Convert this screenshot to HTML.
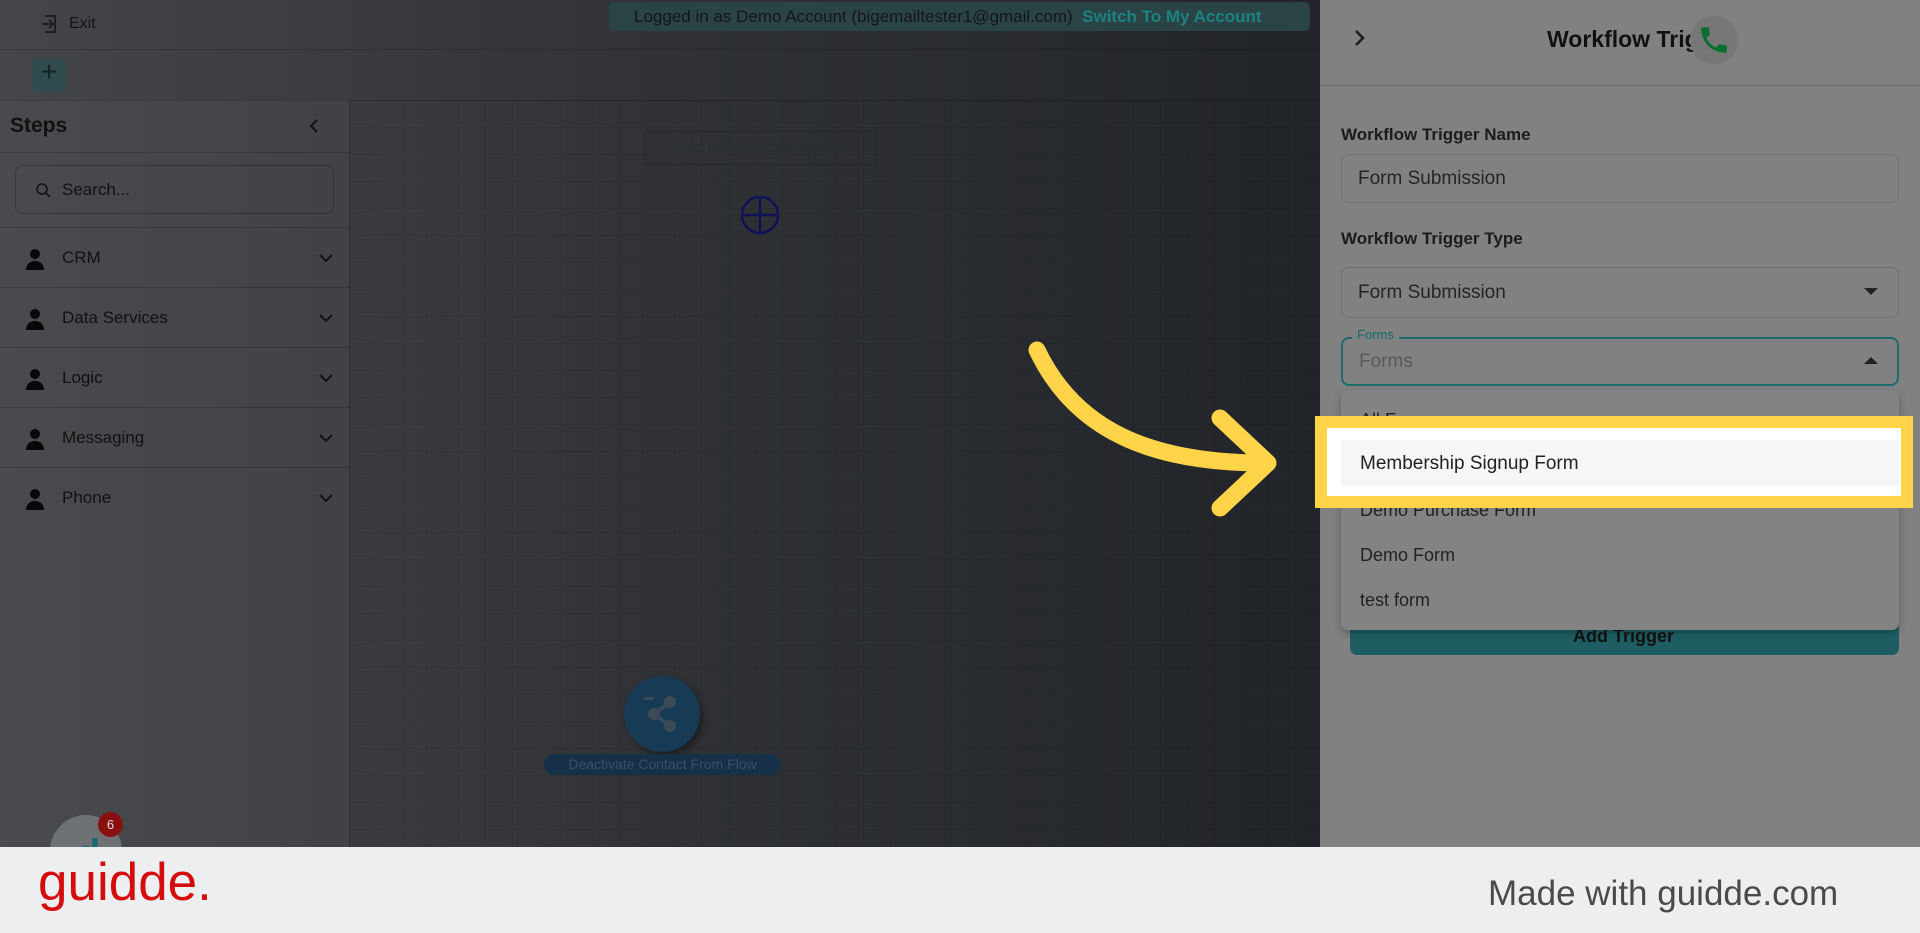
<!DOCTYPE html>
<html><head><meta charset="utf-8">
<style>
*{box-sizing:border-box;margin:0;padding:0}
body{width:1920px;height:933px;overflow:hidden;font-family:"Liberation Sans",sans-serif;position:relative;background:#333}
.abs{position:absolute}
#left{left:0;top:0;width:1320px;height:847px;background:linear-gradient(90deg,#44464a 0%,#303236 50%,#212428 100%)}
#grid{left:350px;top:100px;width:970px;height:747px;background-image:linear-gradient(rgba(0,0,0,.07) 1px,transparent 1px),linear-gradient(90deg,rgba(0,0,0,.07) 1px,transparent 1px);background-size:27px 27px}
.sep{height:1px;background:rgba(0,0,0,.18)}
.item{left:0;width:350px;height:60px;border-bottom:1px solid rgba(0,0,0,.2)}
.item span{position:absolute;left:62px;top:50%;transform:translateY(-50%);font-size:17px;color:#111}
.item svg{position:absolute}
#right{left:1320px;top:0;width:600px;height:847px;background:#818181}
.lbl{position:absolute;left:1341px;font-size:17px;font-weight:bold;color:#1c1c1c}
.inp{position:absolute;left:1341px;width:558px;border:1px solid #707070;border-radius:8px;font-size:19px;color:#252525;padding-left:16px;display:flex;align-items:center}
.opt{position:absolute;left:1360px;font-size:18px;color:#222}
#foot{left:0;top:847px;width:1920px;height:86px;background:#eceef0}
</style></head><body>
<div id="left" class="abs"></div>
<div id="grid" class="abs"></div>
<svg class="abs" style="left:42px;top:14px" width="20" height="20" viewBox="0 0 20 20" fill="none" stroke="#151515" stroke-width="1.6"><path d="M3 2h10v16H3M0 10h10M7 6l4 4-4 4"/></svg>
<div class="abs" style="left:69px;top:15px;font-size:16px;color:#151515">Exit</div>
<div class="abs sep" style="left:0;top:49px;width:1320px"></div>
<div class="abs" style="left:32px;top:59px;width:34px;height:33px;border-radius:6px;background:#2f4b4d"></div>
<div class="abs" style="left:38px;top:56px;font-size:28px;color:#142223;width:22px;text-align:center">+</div>
<div class="abs sep" style="left:0;top:100px;width:1320px"></div>
<div class="abs" style="left:916px;top:17px;font-size:16px;color:#1a1a1a">Draft Flow</div>
<div class="abs" style="left:609px;top:2px;width:701px;height:29px;border-radius:6px;background:#2a4446;font-size:17px;line-height:29px;padding-left:25px;color:#151515">Logged in as Demo Account (bigemailtester1@gmail.com) &nbsp;<b style="color:#1c8281">Switch To My Account</b></div>
<div class="abs" style="left:0;top:100px;width:350px;height:747px;background:rgba(255,255,255,.03);border-right:1px solid rgba(0,0,0,.2)"></div>
<div class="abs" style="left:10px;top:114px;font-size:21px;font-weight:bold;color:#111">Steps</div>
<svg class="abs" style="left:308px;top:118px" width="12" height="16" viewBox="0 0 12 16" fill="none" stroke="#111" stroke-width="2"><path d="M9 2L3 8l6 6"/></svg>
<div class="abs sep" style="left:0;top:152px;width:350px"></div>
<div class="abs" style="left:15px;top:165px;width:319px;height:49px;border:1px solid rgba(0,0,0,.25);border-radius:8px"></div>
<svg class="abs" style="left:35px;top:182px" width="16" height="16" viewBox="0 0 16 16" fill="none" stroke="#111" stroke-width="1.6"><circle cx="7" cy="7" r="5"/><path d="M11 11l4 4"/></svg>
<div class="abs" style="left:62px;top:180px;font-size:17px;color:#121212">Search...</div>
<div class="abs sep" style="left:0;top:227px;width:350px"></div>
<div class="abs item" style="top:228px"><svg style="left:24px;top:20px" width="22" height="22" viewBox="0 0 22 22" fill="#080808"><circle cx="11" cy="6" r="5"/><path d="M2 22c0-6 4-9 9-9s9 3 9 9z"/></svg><span>CRM</span><svg style="left:318px;top:24px" width="16" height="12" viewBox="0 0 16 12" fill="none" stroke="#111" stroke-width="2"><path d="M2 3l6 6 6-6"/></svg></div>
<div class="abs item" style="top:288px"><svg style="left:24px;top:20px" width="22" height="22" viewBox="0 0 22 22" fill="#080808"><circle cx="11" cy="6" r="5"/><path d="M2 22c0-6 4-9 9-9s9 3 9 9z"/></svg><span>Data Services</span><svg style="left:318px;top:24px" width="16" height="12" viewBox="0 0 16 12" fill="none" stroke="#111" stroke-width="2"><path d="M2 3l6 6 6-6"/></svg></div>
<div class="abs item" style="top:348px"><svg style="left:24px;top:20px" width="22" height="22" viewBox="0 0 22 22" fill="#080808"><circle cx="11" cy="6" r="5"/><path d="M2 22c0-6 4-9 9-9s9 3 9 9z"/></svg><span>Logic</span><svg style="left:318px;top:24px" width="16" height="12" viewBox="0 0 16 12" fill="none" stroke="#111" stroke-width="2"><path d="M2 3l6 6 6-6"/></svg></div>
<div class="abs item" style="top:408px"><svg style="left:24px;top:20px" width="22" height="22" viewBox="0 0 22 22" fill="#080808"><circle cx="11" cy="6" r="5"/><path d="M2 22c0-6 4-9 9-9s9 3 9 9z"/></svg><span>Messaging</span><svg style="left:318px;top:24px" width="16" height="12" viewBox="0 0 16 12" fill="none" stroke="#111" stroke-width="2"><path d="M2 3l6 6 6-6"/></svg></div>
<div class="abs item" style="top:468px;border-bottom:none"><svg style="left:24px;top:20px" width="22" height="22" viewBox="0 0 22 22" fill="#080808"><circle cx="11" cy="6" r="5"/><path d="M2 22c0-6 4-9 9-9s9 3 9 9z"/></svg><span>Phone</span><svg style="left:318px;top:24px" width="16" height="12" viewBox="0 0 16 12" fill="none" stroke="#111" stroke-width="2"><path d="M2 3l6 6 6-6"/></svg></div>
<div class="abs" style="left:644px;top:131px;width:232px;height:34px;border:1px solid rgba(0,0,0,.2);font-size:15px;color:#2b2e31;text-align:center;line-height:32px">Add new workflow trigger</div>
<svg class="abs" style="left:740px;top:195px" width="40" height="40" viewBox="0 0 40 40" fill="none" stroke="#0e1257" stroke-width="2.5"><circle cx="20" cy="20" r="18"/><path d="M20 2v36M2 20h36"/></svg>
<div class="abs" style="left:624px;top:676px;width:76px;height:76px;border-radius:50%;background:#173a55;box-shadow:3px 4px 8px rgba(0,0,0,.4)"></div>
<svg class="abs" style="left:640px;top:692px" width="44" height="44" viewBox="0 0 44 44"><path d="M30 10L14 22l16 12" stroke="#3c4a55" stroke-width="4" fill="none"/><circle cx="30" cy="10" r="6" fill="#3c4a55"/><circle cx="14" cy="22" r="6" fill="#3c4a55"/><circle cx="30" cy="34" r="6" fill="#3c4a55"/><rect x="4" y="5" width="10" height="3" fill="#3c4a55"/></svg>
<div class="abs" style="left:544px;top:754px;width:237px;height:21px;border-radius:11px;background:#163049;font-size:14px;line-height:21px;text-align:center;color:#3b4e60">Deactivate Contact From Flow</div>
<div class="abs" style="left:50px;top:815px;width:72px;height:72px;border-radius:50%;background:#6f7275"></div>
<div class="abs" style="left:76px;top:832px;font-size:40px;font-weight:bold;color:#1c6a73">d</div>
<div class="abs" style="left:98px;top:812px;width:25px;height:25px;border-radius:50%;background:#8a0f0f;color:#ddd;font-size:13px;text-align:center;line-height:25px">6</div>
<div id="right" class="abs"></div>
<div class="abs" style="left:1320px;top:85px;width:600px;height:1px;background:#6c6c6c"></div>
<svg class="abs" style="left:1352px;top:28px" width="16" height="20" viewBox="0 0 16 20" fill="none" stroke="#1e1e1e" stroke-width="2.6"><path d="M4 3l7 7-7 7"/></svg>
<div class="abs" style="left:1547px;top:26px;font-size:23px;font-weight:bold;color:#111">Workflow Trig</div>
<div class="abs" style="left:1690px;top:16px;width:48px;height:48px;border-radius:50%;background:#777"></div>
<svg class="abs" style="left:1697px;top:23px" width="34" height="34" viewBox="0 0 24 24"><path fill="#0a6e2e" d="M6.6 10.8a15 15 0 0 0 6.6 6.6l2.2-2.2c.3-.3.7-.4 1-.2 1.1.4 2.3.6 3.6.6.6 0 1 .4 1 1V20c0 .6-.4 1-1 1A17 17 0 0 1 3 4c0-.6.4-1 1-1h3.5c.6 0 1 .4 1 1 0 1.3.2 2.5.6 3.6.1.3 0 .7-.2 1z"/></svg>
<div class="lbl" style="top:125px">Workflow Trigger Name</div>
<div class="inp" style="top:154px;height:49px">Form Submission</div>
<div class="lbl" style="top:229px">Workflow Trigger Type</div>
<div class="inp" style="top:267px;height:51px">Form Submission</div>
<svg class="abs" style="left:1864px;top:288px" width="14" height="8"><path d="M0 0h14L7 7z" fill="#222"/></svg>
<div class="inp" style="top:337px;height:49px;border:2px solid #1c6b6d;color:#5a5a5a">Forms</div>
<div class="abs" style="left:1352px;top:327px;padding:0 5px;background:#818181;font-size:13px;color:#17696b">Forms</div>
<svg class="abs" style="left:1864px;top:357px" width="14" height="8"><path d="M0 7h14L7 0z" fill="#222"/></svg>
<div class="abs" style="left:1350px;top:620px;width:549px;height:35px;border-radius:7px;background:#1e5e62"></div>
<div class="abs" style="left:1341px;top:390px;width:558px;height:240px;border-radius:7px;background:#838383;box-shadow:0 3px 8px rgba(0,0,0,.25)"></div>
<div class="opt" style="top:410px">All Forms</div>
<div class="opt" style="top:500px">Demo Purchase Form</div>
<div class="opt" style="top:545px">Demo Form</div>
<div class="opt" style="top:590px">test form</div>
<div class="abs" style="left:1573px;top:626px;font-size:18px;font-weight:bold;color:#111;clip-path:inset(4px 0 0 0)">Add Trigger</div>
<div class="abs" style="left:1315px;top:416px;width:598px;height:92px;border:12px solid #ffd449;background:#fff"></div>
<div class="abs" style="left:1341px;top:440px;width:558px;height:46px;background:#f5f6f8"></div>
<div class="abs" style="left:1360px;top:453px;font-size:19px;color:#222">Membership Signup Form</div>
<svg class="abs" style="left:0;top:0" width="1920" height="847" fill="none" stroke="#ffd449" stroke-width="17" stroke-linecap="round" stroke-linejoin="round"><path d="M1037 350C1075 430 1150 463 1265 463"/><path d="M1220 418l48 45-48 45"/></svg>
<div id="foot" class="abs"></div>
<div class="abs" style="left:38px;top:852px;font-size:53px;color:#d40c0c;letter-spacing:0px">guidde.</div>
<div class="abs" style="left:1488px;top:874px;font-size:35px;color:#4a4a4a">Made with guidde.com</div>
</body></html>
